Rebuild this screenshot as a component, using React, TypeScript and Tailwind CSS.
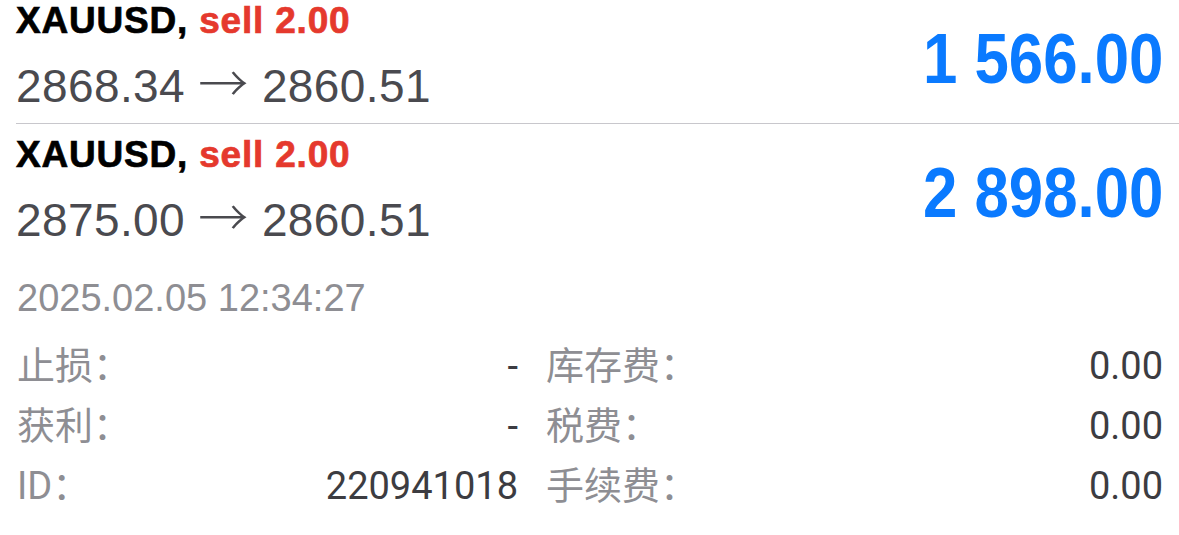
type Position = {
  symbol: string;
  side: string;
  volume: string;
  openPrice: string;
  currentPrice: string;
  profit: string;
};

const positions: Position[] = [
  {
    symbol: "XAUUSD",
    side: "sell",
    volume: "2.00",
    openPrice: "2868.34",
    currentPrice: "2860.51",
    profit: "1 566.00",
  },
  {
    symbol: "XAUUSD",
    side: "sell",
    volume: "2.00",
    openPrice: "2875.00",
    currentPrice: "2860.51",
    profit: "2 898.00",
  },
];

// Detalles de la posición abierta (columna izquierda / derecha)
const details: [string, string, string, string][] = [
  ["止损：", "-", "库存费：", "0.00"],
  ["获利：", "-", "税费：", "0.00"],
  ["ID：", "220941018", "手续费：", "0.00"],
];

function PositionRow({ p, last }: { p: Position; last?: boolean }) {
  return (
    <div
      className={`flex items-center justify-between pr-4 pt-[12px] pb-[9px] h-[134px] ${
        last ? "" : "border-b border-[#c8c7cc]"
      }`}
    >
      <div className="self-start font-['Liberation_Sans',Arial,sans-serif]">
        <div className="text-[37px] leading-none font-bold tracking-[0.8px] text-black [-webkit-text-stroke:0.7px]">
          {p.symbol}, <span className="text-[#e5392d]">{p.side} {p.volume}</span>
        </div>
        <div className="mt-[24px] h-[46px] text-[46px] leading-none tracking-[0.4px] text-[#4a4a4f]">
          {p.openPrice}{" "}
          <span className="text-[50px] leading-[0] font-['Noto_Sans_CJK_SC',sans-serif] font-light">→</span>{" "}
          {p.currentPrice}
        </div>
      </div>
      <div className="origin-right scale-x-[0.87] text-[71px] leading-none font-bold text-[#0a7aff] font-['Liberation_Sans',Arial,sans-serif]">
        {p.profit}
      </div>
    </div>
  );
}

export default function App() {
  return (
    <div className="w-[1179px] h-[535px] bg-white overflow-hidden">
      {/* Posiciones (la primera queda recortada arriba) */}
      <div className="pl-4 -mt-[10px]">
        {positions.map((p, i) => (
          <PositionRow key={i} p={p} last={i === positions.length - 1} />
        ))}
      </div>

      <div className="pl-[17px] pr-4 pt-[21px]">
        <div className="text-[38px] leading-none text-[#8e8e93] font-['Liberation_Sans',Arial,sans-serif]">
          2025.02.05 12:34:27
        </div>

        <div className="mt-[19px] font-['Roboto','Noto_Sans_CJK_SC',sans-serif] text-[38px]">
          {details.map(([l1, v1, l2, v2]) => (
            <div key={l1} className="flex h-[60px] leading-[60px]">
              <div className="w-[501px] flex justify-between">
                <span className="text-[#8e8e93]">{l1}</span>
                <span className="text-[#3c3c41]">{v1}</span>
              </div>
              <div className="flex-1 flex justify-between pl-[28px]">
                <span className="text-[#8e8e93]">{l2}</span>
                <span className="text-[#3c3c41]">{v2}</span>
              </div>
            </div>
          ))}
        </div>
      </div>
    </div>
  );
}
